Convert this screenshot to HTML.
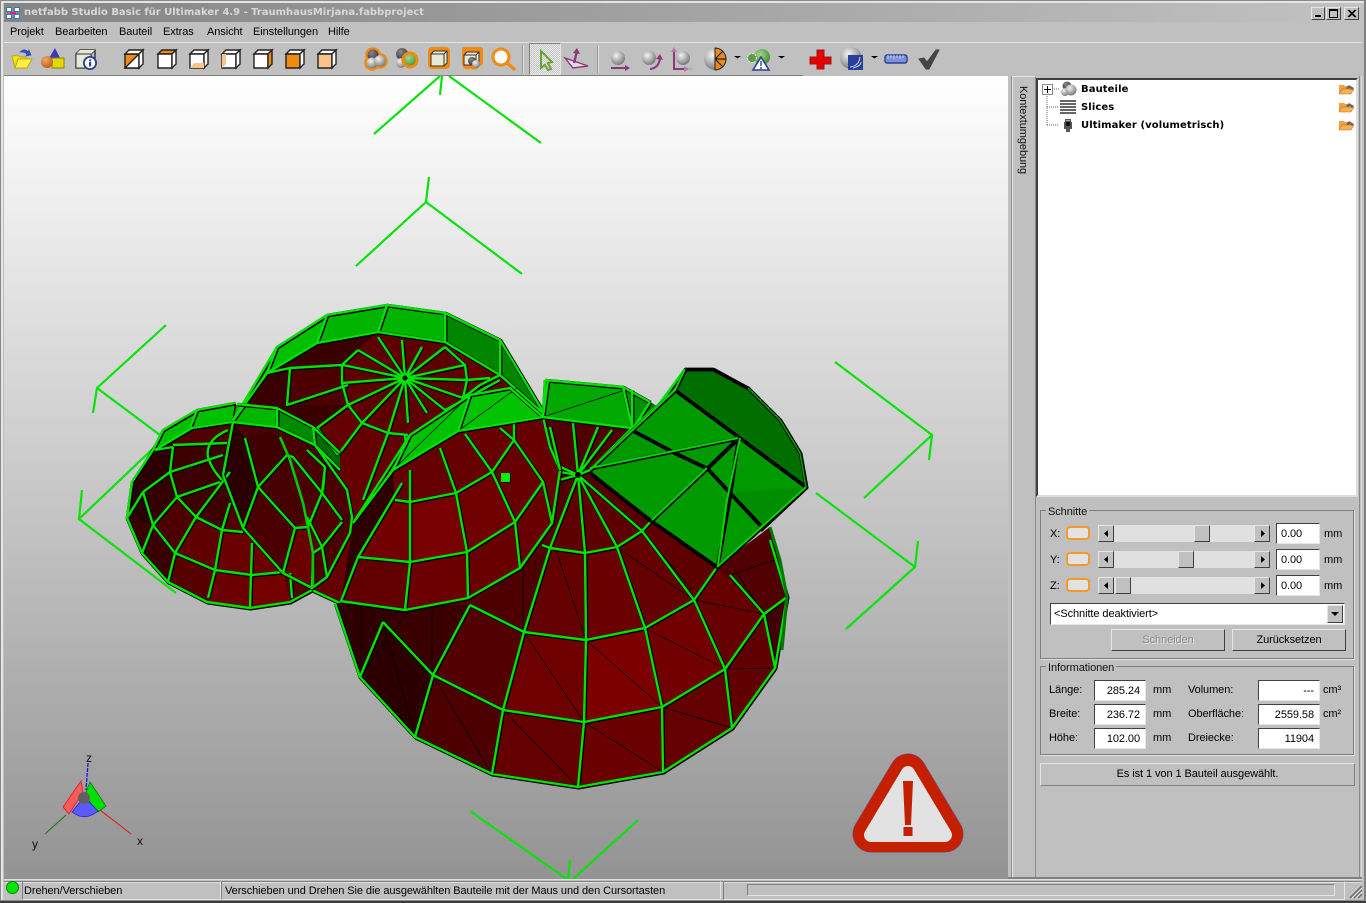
<!DOCTYPE html>
<html><head><meta charset="utf-8"><title>netfabb Studio Basic</title>
<style>
html,body{margin:0;padding:0;background:#c0c0c0}
#w{position:relative;width:1366px;height:903px;overflow:hidden;background:#c0c0c0;font:11px "Liberation Sans",sans-serif;color:#000;letter-spacing:-.08px}
#w div{position:absolute;box-sizing:border-box}
.t{white-space:nowrap;line-height:14px;height:14px;margin-top:1px}
.ins{background:#fff;border:1px solid;border-color:#404040 #e6e6e6 #e6e6e6 #404040;text-align:right;padding-right:5px;line-height:20px}
.btn{background:#c0c0c0;border:1px solid;border-color:#e6e6e6 #404040 #404040 #e6e6e6;text-align:center}
.grp{border:1px solid;border-color:#808080 #808080 #808080 #808080;box-shadow:1px 1px 0 #e0e0e0}
.lg{background:#c0c0c0;padding:0 2px}
.or{background:#e2e2e2;border:2px solid #f59a2a;border-radius:4px;width:24px;height:14px}
.tr{background:#e0e0e0;height:17px}
svg{position:absolute;left:0;top:0;overflow:visible}
</style></head><body><div id="w">

<div style="left:0;top:0;width:1366px;height:1px;background:#8a8a8a"></div>
<div style="left:0;top:1px;width:1366px;height:2px;background:#e4e4e4"></div>
<div style="left:0;top:0;width:1px;height:903px;background:#8a8a8a"></div>
<div style="left:1px;top:1px;width:2px;height:900px;background:#e4e4e4"></div>
<div style="left:1364px;top:0;width:2px;height:903px;background:#808080"></div>
<div style="left:4px;top:3px;width:1358px;height:19px;background:linear-gradient(90deg,#848484,#c2c2c2)"></div>
<div class="t" style="left:24px;top:5px;font:bold 10px 'DejaVu Sans',sans-serif;line-height:14px;color:#d8d8d8;letter-spacing:-.02px">netfabb Studio Basic für Ultimaker 4.9 - TraumhausMirjana.fabbproject</div>
<svg width="22" height="22" style="left:5px;top:5px"><g fill="#3a7ab8"><rect x="1" y="2" width="6" height="5"/><rect x="9" y="2" width="6" height="5"/><rect x="1" y="9" width="6" height="5"/><rect x="9" y="9" width="6" height="5"/></g><g fill="#fff"><rect x="2" y="3" width="4" height="3"/><rect x="10" y="3" width="4" height="3"/><rect x="2" y="10" width="4" height="3"/><rect x="10" y="10" width="4" height="3"/></g><rect x="5" y="7" width="6" height="2" fill="#e0207a"/></svg>

<div class="btn" style="left:1311px;top:7px;width:14px;height:13px"></div><div style="left:1315px;top:15px;width:6px;height:2px;background:#000"></div>
<div class="btn" style="left:1326px;top:7px;width:15px;height:13px"></div><div style="left:1329px;top:9px;width:9px;height:9px;border:1px solid #000;border-top:2px solid #000"></div>
<div class="btn" style="left:1344px;top:7px;width:15px;height:13px"></div>
<svg width="1366" height="30"><path d="M1348 10l7 7M1349 10l7 7M1355 10l-7 7M1356 10l-7 7" stroke="#000" stroke-width="1"/></svg>

<div class="t" style="left:10px;top:24px">Projekt</div>
<div class="t" style="left:55px;top:24px">Bearbeiten</div>
<div class="t" style="left:119px;top:24px">Bauteil</div>
<div class="t" style="left:163px;top:24px">Extras</div>
<div class="t" style="left:207px;top:24px">Ansicht</div>
<div class="t" style="left:253px;top:24px">Einstellungen</div>
<div class="t" style="left:328px;top:24px">Hilfe</div>
<div style="left:4px;top:42px;width:1358px;height:1px;background:#e6e6e6"></div>
<div style="left:4px;top:75px;width:799px;height:1px;background:#808080"></div>
<div style="left:522px;top:45px;width:2px;height:28px;background:#9a9a9a;border-right:1px solid #e0e0e0"></div>
<div style="left:597px;top:45px;width:2px;height:28px;background:#9a9a9a;border-right:1px solid #e0e0e0"></div>
<div style="left:529px;top:43px;width:32px;height:32px;border:1px solid;border-color:#808080 #e6e6e6 #e6e6e6 #808080;background:repeating-conic-gradient(#c8c8c8 0 25%,#e8e8e8 0 50%) 0 0/2px 2px"></div>

<svg width="1366" height="80" id="tb">
<defs>
<radialGradient id="gs" cx=".38" cy=".32" r=".75"><stop offset="0" stop-color="#f4f4f4"/><stop offset="1" stop-color="#707070"/></radialGradient>
<radialGradient id="gd" cx=".38" cy=".32" r=".75"><stop offset="0" stop-color="#888"/><stop offset="1" stop-color="#333"/></radialGradient>
<radialGradient id="go" cx=".38" cy=".32" r=".75"><stop offset="0" stop-color="#f0a868"/><stop offset="1" stop-color="#b85a10"/></radialGradient>
<radialGradient id="gg" cx=".4" cy=".35" r=".7"><stop offset="0" stop-color="#a8d890"/><stop offset="1" stop-color="#3d8a28"/></radialGradient>
</defs>
<!-- open -->
<path d="M12 56l6-1 2 2h6l-1 11H15z" fill="#f0e020" stroke="#b8a810"/><path d="M15 68l3-9h14l-5 9z" fill="#fff040" stroke="#b8a810"/>
<path d="M20 52c3-3 6-3 8 0l1-2 2 5-5 1 1-2c-2-2-4-2-7-2z" fill="#3050c8" stroke="#2040a0" stroke-width=".6"/>
<!-- shapes -->
<path d="M55 48l6 12H48z" fill="#3a3ac0"/><rect x="52" y="58" width="12" height="10" fill="#e4d800" stroke="#8a8200"/><circle cx="47" cy="62" r="6" fill="url(#go)"/>
<!-- cube info -->
<g fill="none" stroke="#222" stroke-width="1.3"><path d="M76 54h15v14H76zM76 54l4-4h15v14l-4 4M91 54l4-4"/></g><path d="M80 50h15l-4 4H76z" fill="#e8e8d0"/><path d="M76 54h15v14H76z" fill="#e8e8d8" stroke="#333"/>
<circle cx="90" cy="63" r="7" fill="#2a3f98"/><circle cx="90" cy="63" r="5.2" fill="#fff"/><rect x="89" y="62" width="2.2" height="4.4" fill="#2a3f98"/><rect x="89" y="59.4" width="2.2" height="1.8" fill="#2a3f98"/>
<!-- cubes -->
<g stroke="#222" stroke-width="1.4">
<path d="M125 54h14v14h-14z" fill="#f08a10"/><path d="M125 68l14-14v14z" fill="#fff"/><path d="M129 50h14l-4 4h-14z" fill="#fff"/><path d="M139 54l4-4v14l-4 4z" fill="#fff"/>
<path d="M162 50h14l-4 4h-14z" fill="#f08a10"/><path d="M158 54h14v14h-14z" fill="#fff"/><path d="M172 54l4-4v14l-4 4z" fill="#fff"/>
<path d="M194 50h14l-4 4h-14z" fill="#fff"/><path d="M190 54h14v14h-14z" fill="#fff"/><path d="M208 50v14l-4 4v-14z" fill="#fff"/><path d="M194 63h10v5h-14z" fill="#f8c48a" stroke="none"/>
<path d="M226 50h14l-4 4h-14z" fill="#fff"/><path d="M222 54h14v14h-14z" fill="#fff"/><path d="M240 50v14l-4 4v-14z" fill="#fff"/><path d="M222 54h4v10l-4 4z" fill="#f8c48a" stroke="none"/>
<path d="M258 50h14l-4 4h-14z" fill="#fff"/><path d="M254 54h14v14h-14z" fill="#fff"/><path d="M272 50v14l-4 4v-14z" fill="#f08a10"/>
<path d="M290 50h14l-4 4h-14z" fill="#fff"/><path d="M286 54h14v14h-14z" fill="#f08a10"/><path d="M304 50v14l-4 4v-14z" fill="#fff"/>
<path d="M322 50h14l-4 4h-14z" fill="#fff"/><path d="M318 54h14v14h-14z" fill="#f8c48a"/><path d="M336 50v14l-4 4v-14z" fill="#fff"/>
</g>
<!-- sphere groups -->
<g stroke="#f08a10" stroke-width="3.6"><circle cx="373" cy="55" r="6"/><circle cx="372" cy="63" r="6"/><circle cx="380" cy="61" r="6"/></g><circle cx="373" cy="55" r="5.5" fill="url(#gd)"/><circle cx="372" cy="63" r="5.5" fill="url(#gs)"/><circle cx="380" cy="61" r="5.8" fill="url(#gs)"/>
<circle cx="402" cy="54" r="6" fill="url(#gd)"/><circle cx="401" cy="63" r="5" fill="url(#gs)"/><circle cx="410" cy="60" r="7" fill="url(#gg)" stroke="#f08a10" stroke-width="3"/>
<rect x="428" y="47" width="22" height="22" rx="4" fill="#f08a10"/><path d="M431 54h13v12h-13zM431 54l3-3h13v12l-3 3M444 54l3-3" fill="#e8e8d4" stroke="#333"/>
<path d="M463 47h17q3 0 3 3v10q1 4-4 7-3 4-8 2-8 2-9-5v-14q0-3 1-3z" fill="#f08a10"/><path d="M464 55h12v10h-12zM464 55l3-3h12v10l-3 3M476 55l3-3" fill="#e8e8d4" stroke="#333"/><circle cx="472" cy="61" r="4" fill="url(#gd)"/><circle cx="476" cy="64" r="4" fill="url(#gs)"/>
<circle cx="501" cy="57" r="8" fill="#fff" stroke="#f08a10" stroke-width="3"/><path d="M507 63l7 6" stroke="#f08a10" stroke-width="3.4" stroke-linecap="round"/>
<!-- cursor -->
<path d="M541 51l11 11-4 1 3 6-3 1-3-5-4 3z" fill="none" stroke="#6ea03c" stroke-width="2"/>
<path d="M565 58l23 8-15 2z" fill="#e8dce8" stroke="#8a3a7a" stroke-width="1.4"/><path d="M574 63l3-12" stroke="#8a3a7a" stroke-width="2.4" fill="none"/><path d="M573 53l4-5 3 6z" fill="#8a3a7a"/>
<!-- rotate group -->
<circle cx="618" cy="58" r="7" fill="url(#gs)"/><path d="M611 68h15" stroke="#8a3a7a" stroke-width="2"/><path d="M625 65l5 3-5 3z" fill="#8a3a7a"/>
<circle cx="649" cy="58" r="7" fill="url(#gs)"/><path d="M650 69q9-1 10-11" fill="none" stroke="#8a3a7a" stroke-width="2"/><path d="M656 59l4-5 3 6z" fill="#8a3a7a"/>
<circle cx="683" cy="58" r="7" fill="url(#gs)"/><path d="M674 50v19h11" fill="none" stroke="#8a3a7a" stroke-width="2"/><path d="M671 52l3-5 3 5zM684 66l5 3-5 3z" fill="#b67aa8"/><path d="M689 67l5 2-5 2z" fill="#c9a0c0"/>
<!-- half sphere -->
<circle cx="715" cy="59" r="11" fill="url(#gs)"/><path d="M715 48a11 11 0 0 1 0 22z" fill="#ea8a1a" stroke="#222"/><path d="M715 59l8-8M715 59h11M715 59l8 8" stroke="#222" stroke-width="1.2"/>
<path d="M734 56h7l-3.500 2.500z" fill="#000"/>
<circle cx="762" cy="57" r="8" fill="url(#gg)"/><circle cx="752" cy="58" r="4.500" fill="#5d9b44" stroke="#eee" stroke-dasharray="2 1"/>
<path d="M761 57l8 13h-16z" fill="#fff" stroke="#2a3f98" stroke-width="1.6"/><path d="M761 61v5M761 67v2" stroke="#2a3f98" stroke-width="1.400"/>
<path d="M778 56h7l-3.500 2.500z" fill="#000"/>
<!-- red cross -->
<path d="M817 50h7v7h7v7h-7v5h-7v-5h-7v-7h7z" fill="#e60000" stroke="#9a1a1a"/>
<circle cx="851" cy="58" r="11" fill="url(#gs)"/><rect x="848" y="55" width="15" height="15" fill="#2a3f98"/><path d="M850 67q9-1 10-10M853 68q8-2 8-6" fill="none" stroke="#cfd6f0"/>
<path d="M871 56h7l-3.500 2.500z" fill="#000"/>
<rect x="885" y="55" width="22" height="8" rx="2" fill="#7f90d8" stroke="#2a3f98" stroke-width="1.400"/><path d="M888 55v4M891 55v3M894 55v4M897 55v3M900 55v4M903 55v3" stroke="#dde" stroke-width=".8"/>
<path d="M919 59l5-1 3 4 9-12h3l-10 19h-3z" fill="#444" stroke="#444"/>
</svg>

<!-- viewport -->
<div style="left:4px;top:76px;width:1004px;height:803px;background:linear-gradient(#ffffff,#939393);overflow:hidden"></div>
<svg width="1366" height="903" style="clip-path:inset(76px 358px 24px 4px)">
<defs>
<style>.gl{stroke:#00e400;stroke-width:2.4;fill:none;stroke-linejoin:round}.bk{stroke:#000;stroke-width:3.800;fill:none;stroke-linejoin:round;}.thin{stroke:#000;stroke-width:.7;fill:none}</style>
<path id="L1" d="M153 450L163 430L197 410L235 403M155 450L192 428L232 422M197 410L190 428M153 450L132 482L127 518L142 553L168 582L207 602L250 608L290 602L312 590M173 447L170 472L177 497L196 517L222 530L243 532M143 492L170 472L223 455M173 445L227 443M143 492L127 518M143 492L153 525L142 553M153 525L177 497L220 482M153 525L175 553L168 582M175 553L196 517L230 472M175 553L215 570L252 575L283 572M215 570L208 598M215 570L222 530L230 503M252 543L250 607M290 573L292 598M228 430Q205 440 208 457Q212 470 222 480M155 450L173 447"/>
<path id="L2" d="M232 422L277 347L327 315L387 305L445 313L500 340L545 415M232 422L267 373L317 343L378 332L445 342L500 375L545 415M277 347L267 373M327 315L317 343M387 305L378 332M445 313L445 342M500 340L500 375M405 378L378 337M405 378L358 350M405 378L343 365M405 378L342 383M405 378L348 405M405 378L362 423M405 378L388 433M405 378L408 423M405 378L427 413M405 378L445 410M405 378L463 398M405 378L467 380M405 378L465 365M405 378L445 347M405 378L422 347M405 378L402 340M358 350L342 365L342 383L348 405L362 423L388 433L408 435M445 347L465 365L467 380L463 398M342 365L290 368M348 385L287 405L290 368L267 373M348 405L317 428L338 455M362 423L338 455M388 433L363 500M405 435L410 500M463 398L480 385L500 375M445 410L500 380M467 380L490 378M312 590L340 603"/>
<path id="L3" d="M237 404L277 408L313 427L340 453M233 422L277 427L315 445L340 470M277 408L277 427M313 427L315 445M223 475L243 528L283 573L312 588L327 577L350 533L352 517L347 490L315 445M233 422L223 475M245 438L258 487L295 528L283 573M258 487L243 528M258 487L287 455M313 553L312 588M322 493L293 457L287 455M322 493L325 467M322 493L342 520M307 517L322 547L342 522M322 547L327 577M295 528L308 527L322 493M313 553L322 547M307 450L325 467L323 490"/>
<path id="L4" d="M335 603L360 677L415 737L492 774L578 787L663 772L732 728L775 668L787 597L770 540M360 677L383 622M415 737L433 675L470 605M492 774L503 710L524 632L550 548L578 475M578 787L584 722L586 640L585 553L578 475M663 772L662 707L645 628L617 547L578 475M732 728L725 669L694 600L642 531L578 475M775 668L764 614L730 575M787 597L764 614M383 622L433 675L503 710L584 722L662 707L725 669L764 614L787 597M470 605L524 632L586 640L645 628L694 600L717 567M542 545L550 548L585 553L617 547L642 531L652 520M578 475L573 423M578 475L598 427M578 475L612 430M578 475L548 470M578 475L548 483M578 475L590 470M578 475L550 462"/>
<path id="L5" d="M340 601L405 610L468 598L520 568L552 523L560 470L550 447L543 417M358 557L410 562L467 552L515 522L543 482M395 500L410 502L456 493L492 472L514 440M341 601L358 557L402 483M410 470L410 562L405 610M440 448L456 493L467 552L468 598M465 434L492 472L515 522L520 568M514 423L514 440L492 472M500 428L514 440L543 482L552 523"/>
<path id="L6" d="M353 523L393 470L458 431L543 417M353 523L410 435L470 395L510 388L543 417M470 395L458 431M410 435L393 470M543 417L545 380M543 417L632 428L632 390M543 417L548 380M545 380L623 387L650 402M623 387L632 428M632 430L650 402M550 427L560 470M632 428L590 470M632 428L675 390M640 430L685 369"/>
<path id="L7" d="M590 470L632 430M632 430L675 390L685 369L713 369L748 388L780 420L800 453L806 487L717 567L650 520L590 473M675 390L740 438L806 487M590 468L738 438M632 430L675 453L707 468L730 493L760 525M738 438L707 468L652 520M738 438L730 493L717 567M806 487L760 530"/>
</defs>

<!-- bracket lines -->
<path d="M374 134L440 76M442 76L440 95M449 76L541 143M356 266L426 202L522 274M426 202L429 177M166 325L97 388L93 413M97 388L176 447M162 440L79 519L176 593M79 519L82 490M835 362L932 435L864 498M932 435L929 460M816 493L915 567L846 629M915 567L918 541M470 811L568 880M638 820L572 880M568 880L570 860" stroke="#08e208" stroke-width="2.200" fill="none"/>

<!-- back dome -->
<path d="M232 422L277 347L327 315L387 305L445 313L500 340L545 415L505 530L400 570L353 525L340 603L312 590L300 520z" fill="#650000"/>
<path d="M267 373L317 343L378 332L340 365L345 405L317 428L277 410L232 422z" fill="#3a0000"/>
<path d="M342 365L345 405L290 405L290 368z" fill="#4c0000"/>
<path d="M358 350L378 332L445 342L467 380L463 398L408 435L362 423L342 383z" fill="#5e0000"/>
<path d="M232 422L277 347L327 315L317 343L267 373z" fill="#00c000"/>
<path d="M327 315L387 305L445 313L445 342L378 332L317 343z" fill="#00b400"/>
<path d="M445 313L500 340L545 415L500 375L445 342z" fill="#008500"/>

<!-- left dome -->
<path d="M235 403L197 410L163 430L132 482L127 518L142 553L168 582L207 602L250 608L290 602L312 590L330 500L250 425z" fill="#500000"/>
<path d="M132 482L153 450L173 447L170 472L143 492z" fill="#2c0000"/>
<path d="M127 518L132 482L143 492L153 525z" fill="#280000"/>
<path d="M142 553L153 525L175 553L168 582zM127 518L153 525L142 553z" fill="#3a0000"/>
<path d="M170 472L173 447L227 443L230 503L222 530L196 517L177 497z" fill="#3c0000"/>
<path d="M143 492L170 472L177 497L153 525z" fill="#340000"/>
<path d="M153 525L177 497L196 517L175 553z" fill="#4e0000"/>
<path d="M175 553L196 517L222 530L215 570z" fill="#600000"/>
<path d="M168 582L175 553L215 570L208 598z" fill="#560000"/>
<path d="M207 602L215 570L252 575L250 608z" fill="#6c0000"/>
<path d="M250 608L252 575L283 572L290 602z" fill="#740000"/>
<path d="M222 530L243 532L283 573L215 570z" fill="#6a0000"/>
<path d="M153 450L163 430L197 410L235 403L232 422L192 428z" fill="#00c000"/>
<!-- second left -->
<path d="M233 422L277 427L315 445L347 490L352 517L350 533L327 577L312 588L283 573L243 528L223 475z" fill="#4a0000"/>
<path d="M233 422L245 438L258 487L243 528L223 475z" fill="#2a0000"/>
<path d="M245 438L277 430L290 460L258 487z" fill="#3e0000"/>
<path d="M258 487L287 455L307 517L295 528z" fill="#460000"/>
<path d="M295 528L307 517L313 553L312 588L283 573z" fill="#6a0000"/>
<path d="M307 517L322 493L342 520L322 547L313 553z" fill="#500000"/>
<path d="M237 404L277 408L277 427L233 422z" fill="#00b800"/>
<path d="M277 408L313 427L315 445L277 427z" fill="#008a00"/>
<path d="M313 427L340 453L340 470L315 445z" fill="#006c00"/>
<use href="#L2" class="bk" transform="translate(.6 .6)"/><use href="#L2" class="gl"/>
<use href="#L1" class="bk" transform="translate(.6 .6)"/><use href="#L1" class="gl"/>
<use href="#L3" class="bk" transform="translate(.6 .6)"/><use href="#L3" class="gl"/>
<path d="M280 437L290 460L303 503L308 527L313 553L313 587" stroke="#00cc00" stroke-width="2.600" fill="none"/>

<!-- big dome -->
<path d="M335 603L360 677L415 737L492 774L578 787L663 772L732 728L775 668L787 597L770 527L717 567L650 520L590 470L578 475L552 523L520 568L468 598L405 610z" fill="#5a0000"/>
<path d="M335 603L360 677L383 622L433 675L470 605z" fill="#2e0000"/>
<path d="M360 677L415 737L433 675L383 622z" fill="#2c0000"/>
<path d="M415 737L492 774L503 710L433 675z" fill="#4c0000"/>
<path d="M492 774L578 787L584 722L503 710z" fill="#640000"/>
<path d="M578 787L663 772L662 707L584 722z" fill="#6a0000"/>
<path d="M663 772L732 728L725 669L662 707z" fill="#640000"/>
<path d="M732 728L775 668L764 614L725 669z" fill="#600000"/>
<path d="M775 668L787 597L764 614z" fill="#420000"/>
<path d="M433 675L503 710L524 632L470 605z" fill="#520000"/>
<path d="M503 710L584 722L586 640L524 632z" fill="#6e0000"/>
<path d="M584 722L662 707L645 628L586 640z" fill="#7c0000"/>
<path d="M662 707L725 669L694 600L645 628z" fill="#720000"/>
<path d="M725 669L764 614L717 567L694 600z" fill="#660000"/>
<path d="M764 614L787 597L770 527L717 567z" fill="#500000"/>
<path d="M524 632L586 640L585 553L550 548z" fill="#640000"/>
<path d="M586 640L645 628L617 547L585 553z" fill="#6a0000"/>
<path d="M645 628L694 600L642 531L617 547z" fill="#640000"/>
<path d="M470 605L524 632L550 548L520 568z" fill="#4e0000"/>
<path d="M550 548L585 553L617 547L642 531L578 475z" fill="#5e0000"/>
<path d="M694 600L717 567L650 520L642 531z" fill="#5e0000"/>
<path d="M578 475L590 470L650 520L642 531z" fill="#560000"/>
<path d="M383 622L433 675L470 605L420 610z" fill="#3a0000"/>
<path d="M543 417L632 428L590 472L578 478L550 548L520 570L550 470z" fill="#500000"/>
<path d="M361 662V605M432 675V610M523 632V570M402 620L360 677M383 622L415 737M433 675L492 774M503 710L578 787M524 632L584 722M586 640L662 707M584 722L663 772M662 707L732 728M645 628L725 669M725 669L775 668M694 600L764 614M586 553L586 640L556 550M617 547L694 600M642 531L692 590M764 614L735 570M730 575L775 560M650 520L730 540" class="thin"/>
<use href="#L4" class="bk" transform="translate(.6 .6)"/><use href="#L4" class="gl"/>
<path d="M770 527L780 560L787 597L782 650" stroke="#007a00" stroke-width="3" fill="none"/>

<!-- mid dome -->
<path d="M340 601L353 523L393 470L458 431L543 417L550 447L560 470L552 523L520 568L468 598L405 610z" fill="#680000"/>
<path d="M341 601L358 557L410 562L405 610z" fill="#620000"/>
<path d="M410 562L467 552L468 598L405 610z" fill="#6c0000"/>
<path d="M358 557L395 500L410 502L410 562z" fill="#720000"/>
<path d="M410 502L456 493L467 552L410 562z" fill="#780000"/>
<path d="M456 493L492 472L515 522L467 552z" fill="#700000"/>
<path d="M393 473L402 481L358 557L341 601L353 525z" fill="#2e0000"/>
<path d="M393 470L458 431L492 472L456 493L410 502L395 500z" fill="#640000"/>
<use href="#L5" class="bk" transform="translate(.6 .6)"/><use href="#L5" class="gl"/>

<!-- bands -->
<path d="M353 523L410 435L470 395L510 388L543 417L458 431L393 470z" fill="#00c200"/>
<path d="M543 417L545 380L623 387L650 402L632 428z" fill="#00a800"/>
<path d="M623 387L650 402L632 428z" fill="#009000"/>
<path d="M632 428L650 402L664 410L640 432z" fill="#007a00"/>
<path d="M393 470L470 395M458 431L517 388M543 417L625 390M353 523L393 470" class="thin"/>
<use href="#L6" class="bk" transform="translate(.6 .6)"/><use href="#L6" class="gl"/>

<!-- block -->
<path d="M675 390L685 369L713 369L748 388L780 420L800 453L806 487z" fill="#006f00"/>
<path d="M590 470L632 430L675 390L806 487L717 567L650 520z" fill="#009a00"/>
<path d="M730 493L806 487L760 530z" fill="#008e00"/>
<use href="#L7" class="bk" transform="translate(.6 .6)"/><path d="M632 430L675 453L707 468L730 493L760 525M675 390L740 438L806 487M738 438L707 468M738 438L730 493L717 567" stroke="#000" stroke-width="2.600" fill="none"/>
<path d="M590 468L738 438M707 468L652 520M590 470L675 390L685 369M806 487L717 567M740 438L727 500L718 565" stroke="#00d800" stroke-width="2" fill="none"/>
<path d="M685 369L713 369L748 388" stroke="#000" stroke-width="2.400" fill="none"/>
<path d="M748 388L780 420L800 453L806 487" stroke="#00a000" stroke-width="1.600" fill="none"/>

<circle cx="405" cy="378" r="2.500" fill="#000"/>
<circle cx="578" cy="475" r="3" fill="#000"/>
<rect x="501" y="473" width="10" height="10" fill="#000"/><rect x="501" y="473" width="9" height="9" fill="#00f000"/>

<!-- axes -->
<g>
<path d="M88 763L86 790" stroke="#1a1ae0" stroke-width="1.300" stroke-dasharray="4 1"/>
<path d="M100 810L131 834" stroke="#e01010" stroke-width="1"/>
<path d="M66 815L45 834" stroke="#107a10" stroke-width="1"/>
<path d="M81 781L63 807L69 814L78 800L84 797z" fill="#ff5a5a" stroke="#e01010" stroke-width=".7"/>
<path d="M90 782L106 806L98 812L90 802L84 797z" fill="#00e000" stroke="#0a6a0a" stroke-width=".7"/>
<path d="M84 797L72 812Q85 822 98 811z" fill="#5a5aff" stroke="#1a1ae0" stroke-width=".7"/>
<circle cx="84" cy="798" r="6" fill="#606060"/>
</g>
<g font-family="Liberation Sans,sans-serif" font-size="12" fill="#111"><text x="86" y="762">z</text><text x="137" y="845">x</text><text x="32" y="848">y</text></g>

<!-- warning -->
<path d="M908 772L871 834L945 834Z" fill="#6a4a90" stroke="#6a4a90" stroke-width="37" stroke-linejoin="round"/>
<path d="M908 772L871 834L945 834Z" fill="#c42000" stroke="#c42000" stroke-width="36" stroke-linejoin="round"/>
<path d="M908 773L871 835L945 835Z" fill="#e2e2e2" stroke="#e2e2e2" stroke-width="14" stroke-linejoin="round"/>
<path d="M903 781H913L911 825H905Z" fill="#c42000"/><rect x="903.500" y="827" width="9" height="9" fill="#c42000"/>
</svg>

<!-- strip & tree -->
<div style="left:1008px;top:76px;width:4px;height:804px;background:#c0c0c0;border-right:1px solid #909090"></div>
<div style="left:1012px;top:76px;width:24px;height:804px;border-left:1px solid #e4e4e4;border-top:1px solid #e4e4e4;border-right:1px solid #8a8a8a"></div>
<div class="t" style="left:1016px;top:85px;height:16px;width:100px;transform-origin:0 0;transform:translate(14px,0) rotate(90deg);line-height:14px;font-size:11px;color:#111">Kontextumgebung</div>
<div style="left:1036px;top:78px;width:322px;height:419px;background:#fff;border:2px solid;border-color:#404040 #dcdcdc #dcdcdc #404040"></div>
<div style="left:1359px;top:76px;width:3px;height:804px;border-left:1px solid #8a8a8a;border-right:1px solid #e0e0e0"></div>

<svg width="1366" height="140" id="tree">
<path d="M1047 94V125M1052 89H1059M1047 107H1058M1047 125H1058" stroke="#666" stroke-dasharray="1 1" fill="none"/>
<rect x="1042.500" y="84.500" width="10" height="10" fill="#fff" stroke="#888"/><path d="M1044 89.500h7M1047.500 86v7" stroke="#000"/>
<circle cx="1067" cy="86" r="4.500" fill="url(#gd)"/><circle cx="1065" cy="92" r="4" fill="url(#gs)"/><circle cx="1071" cy="90" r="5.500" fill="url(#gs)"/>
<path d="M1060 101h16M1060 104h16M1060 107h16M1060 110h16M1060 113h16" stroke="#333" stroke-width="1.400"/>
<path d="M1065 119h6v3h1v7h-2v3h-4v-3h-2v-7h1z" fill="#555"/><rect x="1066" y="122" width="4" height="4" fill="#111"/><rect x="1066" y="120" width="4" height="1" fill="#aaa"/>
<g id="fo"><path d="M1339 85h5l1 1h6v8h-12z" fill="#f0a040"/><path d="M1339 94l3-5h12l-3 5z" fill="#f8b050" stroke="#b06a10" stroke-width=".5"/><path d="M1346 88l3-3 5 3-2 2-2-2-2 1z" fill="#666"/></g>
<use href="#fo" y="18"/><use href="#fo" y="36"/>
</svg>
<div class="t" style="left:1081px;top:82px;font:bold 10px 'DejaVu Sans',sans-serif;line-height:14px;letter-spacing:.1px">Bauteile</div>
<div class="t" style="left:1081px;top:100px;font:bold 10px 'DejaVu Sans',sans-serif;line-height:14px;letter-spacing:.1px">Slices</div>
<div class="t" style="left:1081px;top:118px;font:bold 10px 'DejaVu Sans',sans-serif;line-height:14px;letter-spacing:.1px">Ultimaker (volumetrisch)</div>

<!-- Schnitte -->
<div class="grp" style="left:1040px;top:510px;width:314px;height:149px"></div>
<div class="t lg" style="left:1046px;top:504px;color:#111">Schnitte</div>
<div class="t" style="left:1050px;top:526px">X:</div><div class="t" style="left:1050px;top:552px">Y:</div><div class="t" style="left:1050px;top:578px">Z:</div>
<div class="or" style="left:1066px;top:526px"></div><div class="or" style="left:1066px;top:552px"></div><div class="or" style="left:1066px;top:578px"></div>

<div class="tr" style="left:1114px;top:525px;width:140px"></div>
<div class="btn" style="left:1098px;top:525px;width:16px;height:17px"></div><div class="btn" style="left:1254px;top:525px;width:16px;height:17px"></div>
<div class="btn" style="left:1194px;top:525px;width:16px;height:17px"></div>
<div class="tr" style="left:1114px;top:551px;width:140px"></div>
<div class="btn" style="left:1098px;top:551px;width:16px;height:17px"></div><div class="btn" style="left:1254px;top:551px;width:16px;height:17px"></div>
<div class="btn" style="left:1178px;top:551px;width:16px;height:17px"></div>
<div class="tr" style="left:1114px;top:577px;width:140px"></div>
<div class="btn" style="left:1098px;top:577px;width:16px;height:17px"></div><div class="btn" style="left:1254px;top:577px;width:16px;height:17px"></div>
<div class="btn" style="left:1115px;top:577px;width:16px;height:17px"></div>
<svg width="1366" height="640"><path d="M1108 530v7l-4-3.500zM1108 556v7l-4-3.500zM1108 582v7l-4-3.500zM1261 530v7l4-3.500zM1261 556v7l4-3.500zM1261 582v7l4-3.500z" fill="#000"/></svg>

<div class="ins" style="left:1276px;top:523px;width:44px;height:21px;text-align:left;padding-left:4px">0.00</div>
<div class="ins" style="left:1276px;top:549px;width:44px;height:21px;text-align:left;padding-left:4px">0.00</div>
<div class="ins" style="left:1276px;top:575px;width:44px;height:21px;text-align:left;padding-left:4px">0.00</div>
<div class="t" style="left:1324px;top:526px">mm</div><div class="t" style="left:1324px;top:552px">mm</div><div class="t" style="left:1324px;top:578px">mm</div>

<div class="ins" style="left:1050px;top:603px;width:295px;height:22px;text-align:left;padding-left:3px;line-height:21px">&lt;Schnitte deaktiviert&gt;</div>
<div class="btn" style="left:1327px;top:605px;width:16px;height:18px"></div>
<svg width="1366" height="630"><path d="M1331 612h8l-4 4z" fill="#000"/></svg>
<div class="btn" style="left:1111px;top:629px;width:114px;height:22px;line-height:21px;color:#8a8a8a;text-shadow:1px 1px 0 #e6e6e6">Schneiden</div>
<div class="btn" style="left:1232px;top:629px;width:114px;height:22px;line-height:21px">Zurücksetzen</div>

<!-- Informationen -->
<div class="grp" style="left:1040px;top:666px;width:314px;height:89px"></div>
<div class="t lg" style="left:1046px;top:660px;color:#111">Informationen</div>
<div class="t" style="left:1049px;top:682px">Länge:</div><div class="t" style="left:1049px;top:706px">Breite:</div><div class="t" style="left:1049px;top:730px">Höhe:</div>
<div class="ins" style="left:1094px;top:680px;width:52px;height:21px">285.24</div>
<div class="ins" style="left:1094px;top:704px;width:52px;height:21px">236.72</div>
<div class="ins" style="left:1094px;top:728px;width:52px;height:21px">102.00</div>
<div class="t" style="left:1153px;top:682px">mm</div><div class="t" style="left:1153px;top:706px">mm</div><div class="t" style="left:1153px;top:730px">mm</div>
<div class="t" style="left:1188px;top:682px">Volumen:</div><div class="t" style="left:1188px;top:706px">Oberfläche:</div><div class="t" style="left:1188px;top:730px">Dreiecke:</div>
<div class="ins" style="left:1258px;top:680px;width:62px;height:21px">---</div>
<div class="ins" style="left:1258px;top:704px;width:62px;height:21px">2559.58</div>
<div class="ins" style="left:1258px;top:728px;width:62px;height:21px">11904</div>
<div class="t" style="left:1323px;top:682px">cm³</div><div class="t" style="left:1323px;top:706px">cm²</div>

<div style="left:1040px;top:763px;width:315px;height:23px;border:1px solid;border-color:#e4e4e4 #808080 #808080 #e4e4e4;text-align:center;line-height:21px">Es ist 1 von 1 Bauteil ausgewählt.</div>

<!-- Status -->
<div style="left:4px;top:879px;width:1358px;height:1px;background:#e0e0e0"></div>
<div style="left:1008px;top:877px;width:354px;height:2px;background:#808080"></div>
<div style="left:4px;top:881px;width:1358px;height:1px;background:#808080"></div>
<div style="left:4px;top:882px;width:1358px;height:1px;background:#e0e0e0"></div>
<div style="left:0;top:900px;width:1366px;height:3px;background:#3c3c3c;border-top:1px solid #8a8a8a"></div>
<svg width="1366" height="903"><circle cx="12.500" cy="887.500" r="6" fill="#00e800" stroke="#107a10"/></svg>
<div style="left:22px;top:881px;width:199px;height:19px;border:1px solid;border-color:#808080 #e4e4e4 #e4e4e4 #808080"></div>
<div class="t" style="left:24px;top:883px">Drehen/Verschieben</div>
<div style="left:221px;top:881px;width:500px;height:19px;border:1px solid;border-color:#808080 #e4e4e4 #e4e4e4 #808080"></div>
<div class="t" style="left:225px;top:883px">Verschieben und Drehen Sie die ausgewählten Bauteile mit der Maus und den Cursortasten</div>
<div style="left:723px;top:881px;width:622px;height:19px;border:1px solid;border-color:#808080 #e4e4e4 #e4e4e4 #808080"></div>
<div style="left:747px;top:884px;width:588px;height:12px;border:1px solid;border-color:#808080 #e4e4e4 #e4e4e4 #808080"></div>
<svg width="1366" height="903"><path d="M1350 898l12-12M1354 898l8-8M1358 898l4-4" stroke="#666" stroke-width="1.500"/><path d="M1352 898l10-10M1356 898l6-6" stroke="#eee"/></svg>
</div></body></html>
